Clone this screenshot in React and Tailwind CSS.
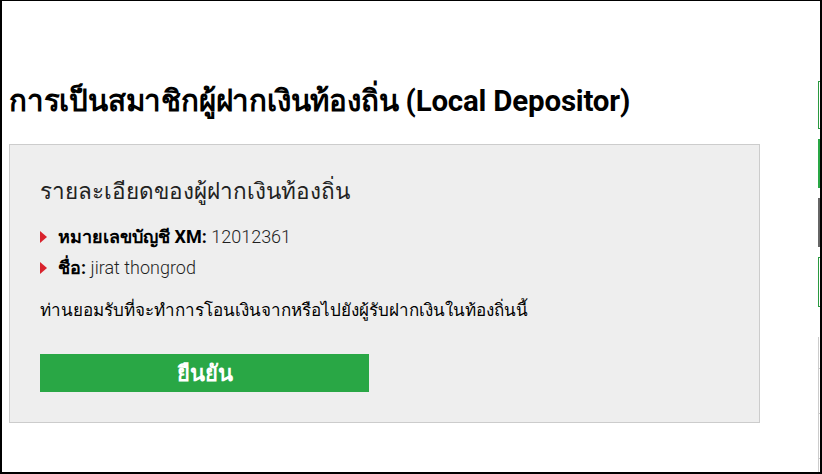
export default function App() {
  return (
    <div className="w-[822px] h-[474px] bg-white border-t border-l-2 border-b-2 border-r-2 border-black flex overflow-hidden">
      <div className="flex-1 pl-[7px] pr-[58px] pt-[80px] font-['Roboto','Noto_Sans',sans-serif] text-[#222]">
        <h1 className="text-[29.5px] leading-[40px] font-bold text-black tracking-[-0.2px] whitespace-nowrap">
          การเป็นสมาชิกผู้ฝากเงินท้องถิ่น (Local Depositor)
        </h1>
        <div className="mt-[23px] bg-[#eeeeee] border border-[#cccccc] h-[279px] pl-[30px] pt-[30px]">
          <h2 className="text-[22.5px] leading-[32px] text-[#222]">รายละเอียดของผู้ฝากเงินท้องถิ่น</h2>
          <ul className="mt-[17px] flex flex-col gap-[5px] text-[18px] leading-[26px]">
            <li className="flex items-center gap-[11px]">
              <span className="w-0 h-0 border-y-[6px] border-y-transparent border-l-[7px] border-l-[#d9232d]"></span>
              <span>
                <b className="font-bold text-black">หมายเลขบัญชี XM:</b>{" "}
                <span className="font-light text-[#1f1f1f]">12012361</span>
              </span>
            </li>
            <li className="flex items-center gap-[11px]">
              <span className="w-0 h-0 border-y-[6px] border-y-transparent border-l-[7px] border-l-[#d9232d]"></span>
              <span>
                <b className="font-bold text-black">ชื่อ:</b>{" "}
                <span className="font-light text-[#1f1f1f]">jirat thongrod</span>
              </span>
            </li>
          </ul>
          <p className="mt-[17px] text-[17px] leading-[24px] text-black">
            ท่านยอมรับที่จะทำการโอนเงินจากหรือไปยังผู้รับฝากเงินในท้องถิ่นนี้
          </p>
          <button className="mt-[32px] w-[329px] h-[38px] bg-[#29a745] text-white text-[22px] font-bold flex items-center justify-center">
            ยืนยัน
          </button>
        </div>
      </div>
      <div className="w-[2px] flex flex-col">
        <div className="mt-[80px] h-[48px] border border-[#2a9a40] border-r-0"></div>
        <div className="mt-[10px] h-[49px] bg-[#29a745]"></div>
        <div className="mt-[10px] h-[49px] bg-[#666666]"></div>
        <div className="mt-[10px] h-[50px] border border-[#2a9a40] border-r-0"></div>
        <div className="mt-[30px] flex-1 border-l border-[#cccccc] flex flex-col">
          <div className="h-[32px] border-b border-[#cccccc]"></div>
          <div className="h-[45px] border-b border-[#cccccc]"></div>
          <div className="h-[45px] border-b border-[#cccccc]"></div>
        </div>
      </div>
    </div>
  );
}
